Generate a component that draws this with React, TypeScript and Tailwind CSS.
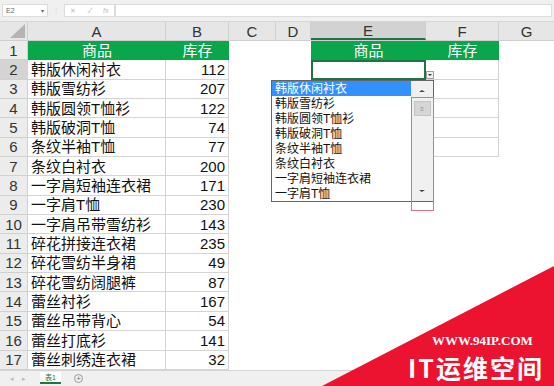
import React from 'react';

const cjk = { fontFamily: '"Noto Sans CJK SC", "Noto Sans", sans-serif' };
const sheetFont = { fontFamily: '"Liberation Sans", "Noto Sans CJK SC", sans-serif' };

const rows: [string, number][] = [
  ['韩版休闲衬衣', 112],
  ['韩版雪纺衫', 207],
  ['韩版圆领T恤衫', 122],
  ['韩版破洞T恤', 74],
  ['条纹半袖T恤', 77],
  ['条纹白衬衣', 200],
  ['一字肩短袖连衣裙', 171],
  ['一字肩T恤', 230],
  ['一字肩吊带雪纺衫', 143],
  ['碎花拼接连衣裙', 235],
  ['碎花雪纺半身裙', 49],
  ['碎花雪纺阔腿裤', 87],
  ['蕾丝衬衫', 167],
  ['蕾丝吊带背心', 54],
  ['蕾丝打底衫', 141],
  ['蕾丝刺绣连衣裙', 32],
];

const listItems = ['韩版休闲衬衣', '韩版雪纺衫', '韩版圆领T恤衫', '韩版破洞T恤', '条纹半袖T恤', '条纹白衬衣', '一字肩短袖连衣裙', '一字肩T恤'];

const RowHead: React.FC<{ n: number; active?: boolean }> = ({ n, active }) => (
  <div className={`w-[28px] shrink-0 flex items-center justify-center border-r border-b border-[#d0d0d0] text-[15px] leading-none text-[#333] ${active ? 'bg-[#d4d4d4]' : 'bg-[#ececec]'}`}>
    {n}
  </div>
);

const App: React.FC = () => {
  return (
    <div className="relative w-[554px] h-[386px] overflow-hidden bg-white flex flex-col" style={sheetFont}>
      {/* formula bar */}
      <div className="h-[22px] shrink-0 bg-[#f0f0f0] flex items-center px-[2px] border-b border-[#d6d6d6]">
        <div className="w-[46px] h-[13px] bg-white border border-[#dcdcdc] flex items-center justify-between px-[3px] text-[7px] leading-none text-[#666]">
          <span>E2</span>
          <span className="text-[6px]">▾</span>
        </div>
        <div className="w-[16px] flex justify-center text-[8px] leading-none text-[#ccc]">⋮</div>
        <div className="w-[51px] h-[13px] bg-white border border-[#dcdcdc] flex items-center justify-around text-[7px] leading-none text-[#bbb]">
          <span>✕</span>
          <span>✓</span>
          <span className="italic">fx</span>
        </div>
        <div className="flex-1 h-[13px] bg-white border border-[#dcdcdc]" />
      </div>

      {/* column headers */}
      <div className="h-[19px] shrink-0 flex bg-[#e6e6e6] border-b border-[#cfcfcf] text-[15px] leading-none text-[#333]">
        <div className="w-[28px] shrink-0 border-r border-[#d0d0d0] flex items-end justify-end p-[2px]">
          <div className="w-0 h-0 border-l-[15px] border-l-transparent border-b-[14px] border-b-[#b4b4b4]" />
        </div>
        <div className="w-[138px] shrink-0 border-r border-[#d0d0d0] flex items-center justify-center">A</div>
        <div className="w-[63px] shrink-0 border-r border-[#d0d0d0] flex items-center justify-center">B</div>
        <div className="w-[47px] shrink-0 border-r border-[#d0d0d0] flex items-center justify-center">C</div>
        <div className="w-[35px] shrink-0 border-r border-[#d0d0d0] flex items-center justify-center">D</div>
        <div className="w-[115px] shrink-0 border-r border-[#d0d0d0] bg-[#d2d2d2] border-b-2 border-b-[#217346] flex items-center justify-center">E</div>
        <div className="w-[73px] shrink-0 border-r border-[#d0d0d0] flex items-center justify-center">F</div>
        <div className="flex-1 flex items-center justify-center">G</div>
      </div>

      {/* row 1 */}
      <div className="h-[19.35px] shrink-0 flex text-[15px] leading-none">
        <RowHead n={1} />
        <div className="w-[138px] shrink-0 bg-[#0aa64c] text-white flex items-center justify-center">商品</div>
        <div className="w-[63px] shrink-0 bg-[#0aa64c] text-white flex items-center justify-center">库存</div>
        <div className="w-[47px] shrink-0" />
        <div className="w-[35px] shrink-0" />
        <div className="w-[115px] shrink-0 bg-[#0aa64c] text-white flex items-center justify-center">商品</div>
        <div className="w-[73px] shrink-0 bg-[#0aa64c] text-white flex items-center justify-center">库存</div>
        <div className="flex-1" />
      </div>

      {rows.map(([name, qty], i) => {
        const n = i + 2;
        const inTable = n <= 6;
        return (
          <div key={n} className="h-[19.35px] shrink-0 flex text-[15px] leading-none">
            <RowHead n={n} active={n === 2} />
            <div className="w-[138px] shrink-0 border-r border-b border-[#d4d4d4] flex items-center pl-[3px] text-[#111] whitespace-nowrap">{name}</div>
            <div className="w-[63px] shrink-0 border-r border-b border-[#d4d4d4] flex items-center justify-end pr-[3px] text-[#111]">{qty}</div>
            <div className="w-[47px] shrink-0" />
            <div className="w-[35px] shrink-0" />
            {n === 2 ? (
              <div className="w-[115px] shrink-0 border-2 border-[#217346] bg-white" />
            ) : (
              <div className={`w-[115px] shrink-0 ${inTable ? 'border-r border-b border-[#d4d4d4]' : ''}`} />
            )}
            <div className={`w-[73px] shrink-0 ${inTable ? 'border-r border-b border-[#d4d4d4]' : ''}`} />
            <div className="flex-1" />
          </div>
        );
      })}

      {/* sheet tabs */}
      <div className="flex-1 bg-[#f0f0f0] border-t border-[#d6d6d6] flex items-center text-[#bbb] leading-none">
        <span className="ml-[10px] text-[7px]">◂</span>
        <span className="ml-[8px] text-[7px]">▸</span>
        <div className="ml-[14px] w-[21px] h-[12px] bg-white border-b-2 border-[#217346] text-[7px] text-[#217346] flex items-center justify-center">表1</div>
        <span className="ml-[13px] w-[9px] h-[9px] rounded-full border border-[#999] text-[8px] leading-[7px] text-[#777] flex items-center justify-center">+</span>
      </div>

      {/* dropdown arrow button */}
      <div className="absolute left-[426px] top-[71px] w-[8px] h-[8px] bg-[#f0f0f0] border border-[#a0a0a0] flex items-center justify-center">
        <div className="w-0 h-0 border-l-[2px] border-r-[2px] border-t-[2px] border-l-transparent border-r-transparent border-t-[#333]" />
      </div>

      {/* dropdown list */}
      <div className="absolute left-[271px] top-[80px] w-[163px] h-[122px] bg-white border border-[#646464] flex">
        <div className="flex-1 flex flex-col">
          {listItems.map((t, i) => (
            <div key={t} className={`h-[15px] pl-[3px] flex items-center text-[12px] leading-none whitespace-nowrap overflow-hidden ${i === 0 ? 'bg-[#3390ff] text-white' : 'text-[#111]'}`}>{t}</div>
          ))}
        </div>
        <div className="w-[22px] bg-[#f0f0f0] flex flex-col items-center">
          <div className="h-[20px] flex items-center justify-center">
            <div className="w-0 h-0 border-l-[3px] border-r-[3px] border-b-[2px] border-l-transparent border-r-transparent border-b-[#444]" />
          </div>
          <div className="w-[17px] h-[15px] bg-[#d6d6d6] border border-[#c4c4c4] flex items-center justify-center text-[6px] leading-none text-[#888]">≡</div>
          <div className="flex-1" />
          <div className="h-[20px] flex items-center justify-center">
            <div className="w-0 h-0 border-l-[3px] border-r-[3px] border-t-[2px] border-l-transparent border-r-transparent border-t-[#444]" />
          </div>
        </div>
      </div>

      {/* red highlight box */}
      <div className="absolute left-[411px] top-[97px] w-[23px] h-[114px] border border-[#e0707f]" />

      {/* watermark */}
      <svg className="absolute left-0 top-0" width="554" height="386">
        <polygon points="322,386 554,266 554,386" fill="#ec1330" />
      </svg>
      <div className="absolute left-[432px] top-[334px] text-[13px] leading-none font-bold text-white" style={{ fontFamily: '"Liberation Serif", serif' }}>WWW.94IP.COM</div>
      <div className="absolute left-[408px] top-[352px] text-[25px] leading-[30px] font-bold text-white tracking-[2px] whitespace-nowrap" style={cjk}>IT运维空间</div>
    </div>
  );
};

export default App;
